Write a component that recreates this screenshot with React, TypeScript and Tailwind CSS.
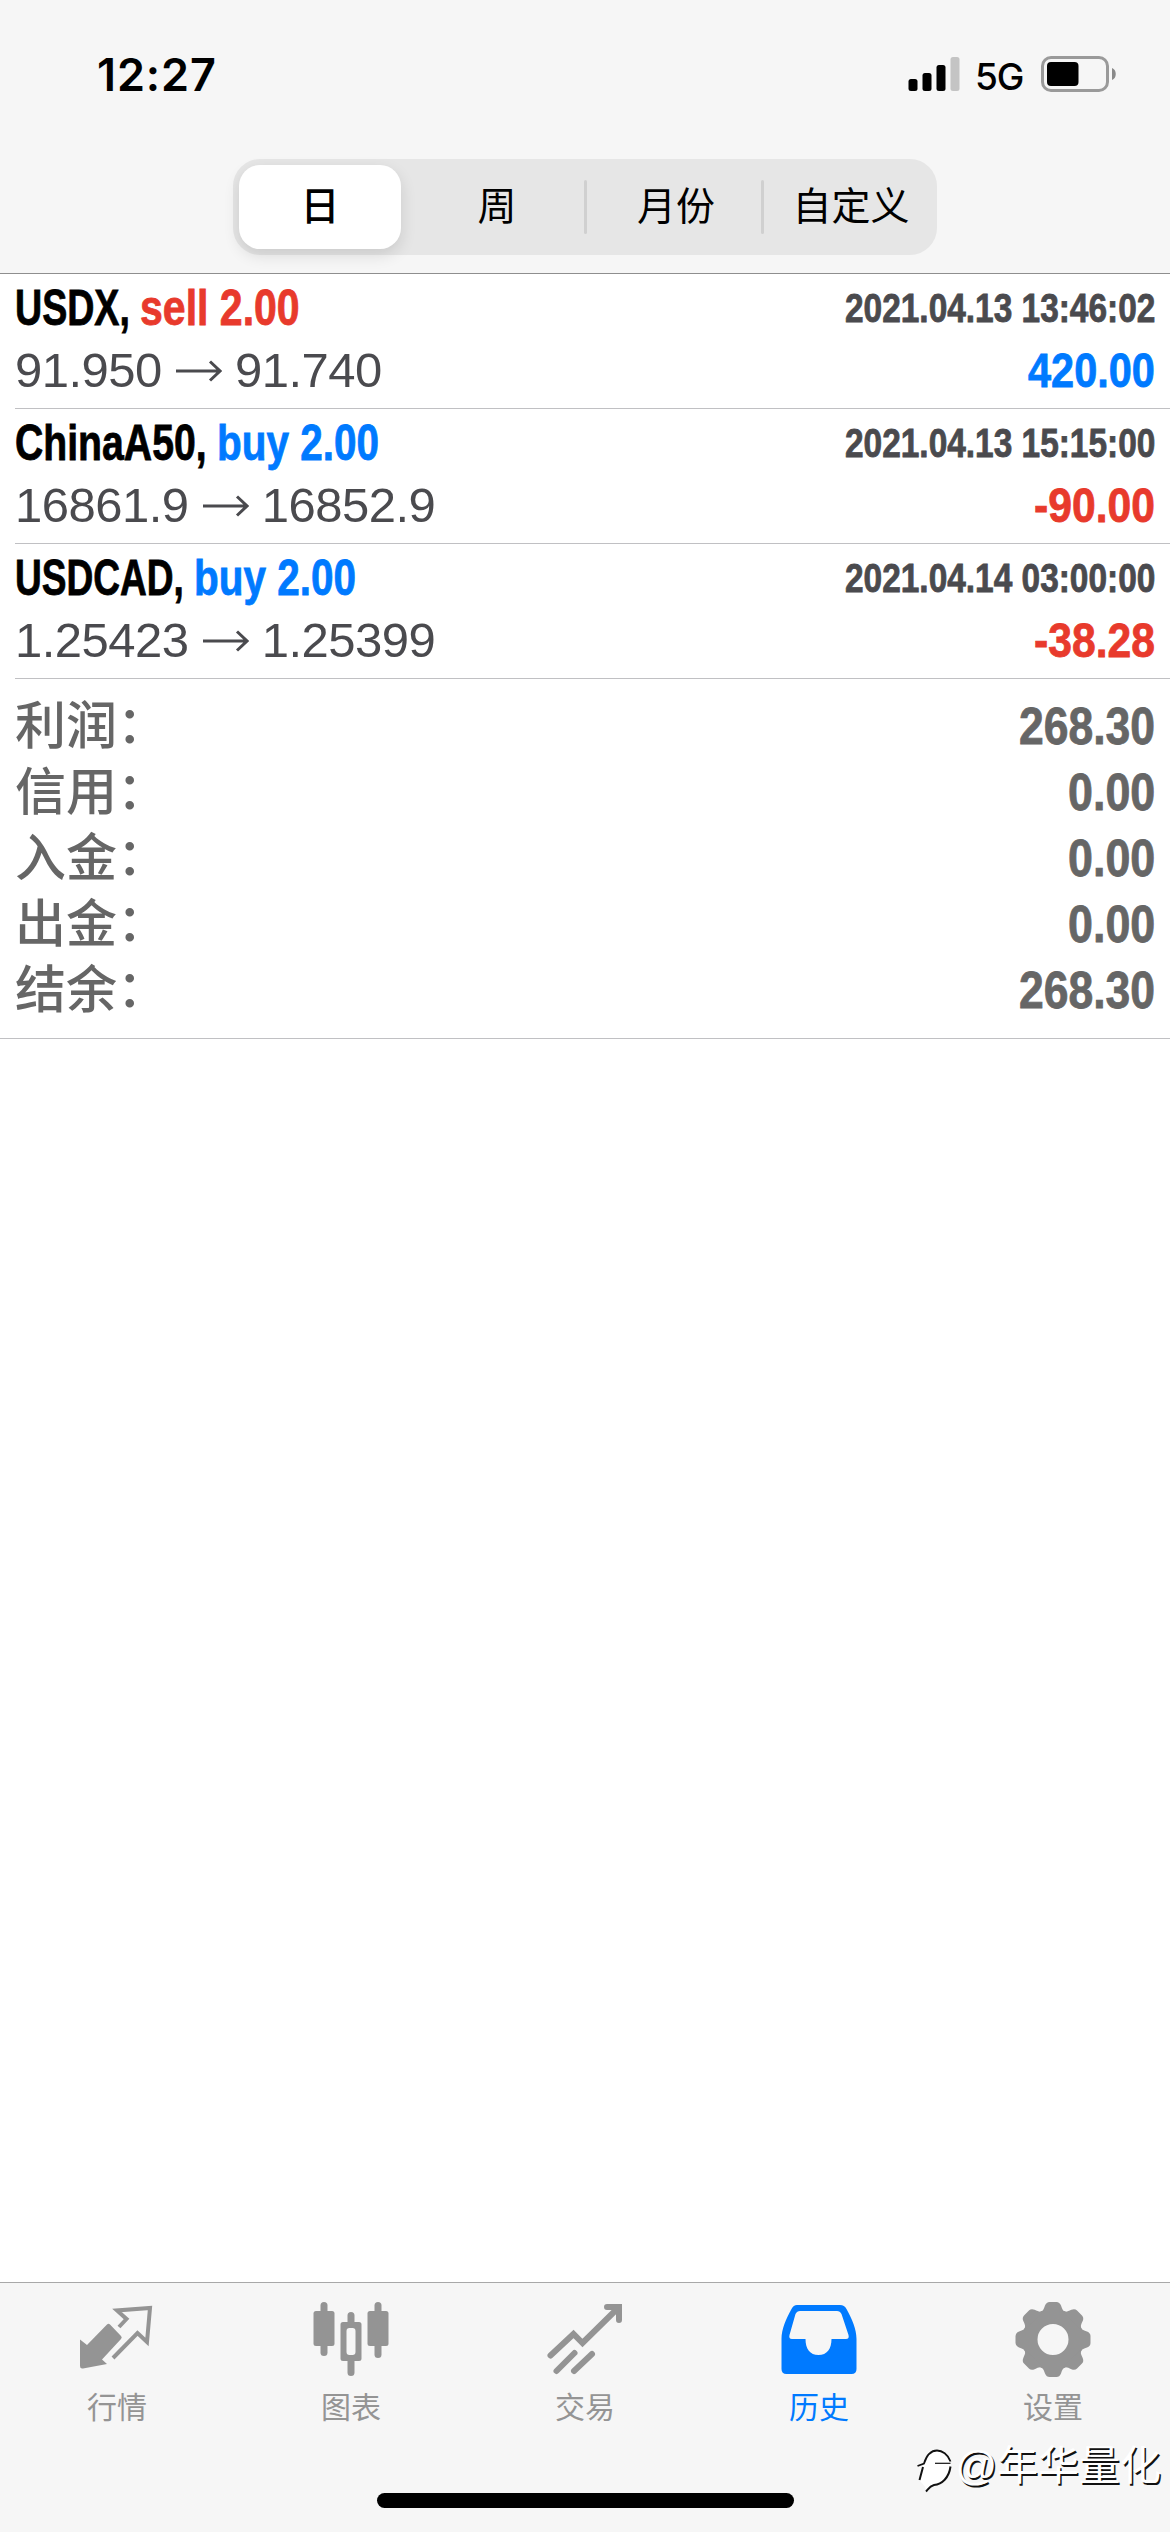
import { useLayoutEffect, useRef, useState } from 'react'
import type { ReactNode } from 'react'

type Side = 'buy' | 'sell'

interface Deal {
  symbol: string
  symbolWidth: number
  side: Side
  volume: string
  sideWidth: number
  open: string
  close: string
  time: string
  profit: string
  profitWidth: number
}

const DEALS: Deal[] = [
  { symbol: 'USDX,', symbolWidth: 115, side: 'sell', volume: '2.00', sideWidth: 160, open: '91.950', close: '91.740', time: '2021.04.13 13:46:02', profit: '420.00', profitWidth: 127 },
  { symbol: 'ChinaA50,', symbolWidth: 192, side: 'buy', volume: '2.00', sideWidth: 162, open: '16861.9', close: '16852.9', time: '2021.04.13 15:15:00', profit: '-90.00', profitWidth: 121 },
  { symbol: 'USDCAD,', symbolWidth: 169, side: 'buy', volume: '2.00', sideWidth: 162, open: '1.25423', close: '1.25399', time: '2021.04.14 03:00:00', profit: '-38.28', profitWidth: 121 },
]

const SUMMARY = [
  { label: '利润', value: '268.30', width: 136 },
  { label: '信用', value: '0.00', width: 87 },
  { label: '入金', value: '0.00', width: 87 },
  { label: '出金', value: '0.00', width: 87 },
  { label: '结余', value: '268.30', width: 136 },
]

// Condenses its text horizontally until it takes up exactly `width`
function Condensed({ width, className = '', children }: { width: number; className?: string; children: ReactNode }) {
  const ref = useRef<HTMLSpanElement>(null)
  const [scale, setScale] = useState(0.8)

  useLayoutEffect(() => {
    if (ref.current) setScale(width / ref.current.offsetWidth)
  }, [width, children])

  return (
    <span className={`block shrink-0 ${className}`} style={{ width }}>
      <span
        ref={ref}
        className="inline-block origin-left font-bold whitespace-nowrap [-webkit-text-stroke:0.8px_currentColor]"
        style={{ transform: `scaleX(${scale})` }}
      >
        {children}
      </span>
    </span>
  )
}

// ── Status bar ────────────────────────────────────────────────────────────
function StatusBar() {
  return (
    <div className="flex h-[159px] items-start justify-between pt-[56px] pr-[53px] pl-[97px]">
      <span className="font-['Inter'] text-[45px] leading-[37px] font-semibold tracking-[0.9px]">12:27</span>
      <div className="flex items-start">
        <svg width="52" height="36" viewBox="0 0 52 36" aria-hidden="true">
          <rect x="0.5" y="23" width="9" height="12" rx="2.5" />
          <rect x="14.5" y="17" width="9" height="18" rx="2.5" />
          <rect x="28.5" y="9" width="9" height="26" rx="2.5" />
          <rect x="42.5" y="1" width="9" height="34" rx="2.5" fill="#c4c4c4" />
        </svg>
        <span className="ml-[15px] w-[66px] font-['Inter'] text-[37px] leading-[41px] font-medium tracking-[-1.2px]">5G</span>
        <svg width="76" height="37" viewBox="0 0 76 37" aria-hidden="true">
          <rect x="1.5" y="1.5" width="65" height="33" rx="8.5" fill="none" stroke="#9a9a9a" strokeWidth="3" />
          <rect x="6" y="6" width="31.5" height="24" rx="4" />
          <path d="M71 12c5 1.500 5 10.500 0 12z" fill="#8a8a8a" />
        </svg>
      </div>
    </div>
  )
}

function PeriodTabs() {
  return (
    <div className="mx-auto flex h-24 w-[704px] items-stretch rounded-[27px] bg-[#e6e6e6] text-[39px] leading-none">
      <div className="my-1.5 mr-[9px] ml-[6px] flex w-[162px] items-center justify-center rounded-[21px] bg-white pb-px font-medium shadow-[0_6px_16px_rgba(0,0,0,0.12)]">
        日
      </div>
      <div className="flex w-[174px] items-center justify-center pb-px">周</div>
      <div className="my-[21px] w-[3px] rounded-full bg-[#d0d0d0]" />
      <div className="flex w-[174px] items-center justify-center pb-px pl-1">月份</div>
      <div className="my-[21px] w-[3px] rounded-full bg-[#d0d0d0]" />
      <div className="flex flex-1 items-center justify-center pb-px pl-px">自定义</div>
    </div>
  )
}

// ── History list ──────────────────────────────────────────────────────────
function Arrow() {
  return (
    <svg className="mr-[13px] ml-[14px]" width="46" height="24" viewBox="0 0 46 24" fill="none" stroke="currentColor" strokeWidth="3" aria-hidden="true">
      <path d="M0 12h44M34 2.500 44 12l-10 9.500" />
    </svg>
  )
}

function DealRow({ deal }: { deal: Deal }) {
  return (
    <div className="ml-[15px] h-[135px] border-b border-[#c0c0c3] pr-[15px]">
      <div className="flex h-[66px] items-center justify-between pt-0.5">
        <div className="flex text-[50px] leading-none">
          <Condensed width={deal.symbolWidth}>{deal.symbol}</Condensed>
          <Condensed
            width={deal.sideWidth}
            className={deal.side === 'buy' ? 'ml-[10px] text-[#007aff]' : 'ml-[10px] text-[#e83a2c]'}
          >
            {`${deal.side} ${deal.volume}`}
          </Condensed>
        </div>
        <Condensed width={310} className="pb-px text-[40px] leading-none text-[#4a4a4e]">{deal.time}</Condensed>
      </div>
      <div className="flex h-[61px] items-center justify-between text-[49px] leading-none">
        <div className="flex items-center tracking-[-0.5px] text-[#4a4a4e]">
          <span>{deal.open}</span>
          <Arrow />
          <span>{deal.close}</span>
        </div>
        <Condensed
          width={deal.profitWidth}
          className={deal.profit.startsWith('-') ? 'text-[#e83a2c]' : 'text-[#007aff]'}
        >
          {deal.profit}
        </Condensed>
      </div>
    </div>
  )
}

function Summary() {
  return (
    <div className="h-[360px] border-b border-[#c0c0c3] pt-[14px] pr-[15px] pl-[15px] text-[#666]">
      {SUMMARY.map((row) => (
        <div key={row.label} className="flex h-[66px] items-center justify-between text-[51px] leading-none">
          <span className="font-medium">
            {row.label}
            <span className="relative -top-px">：</span>
          </span>
          <Condensed width={row.width}>{row.value}</Condensed>
        </div>
      ))}
    </div>
  )
}

// ── Tab bar icons ─────────────────────────────────────────────────────────
function QuotesIcon() {
  return (
    <svg width="76" height="80" viewBox="0 0 76 80" fill="none" aria-hidden="true">
      <path d="M1 36.500 8 42 28 21.500q1.500-1.500 3 0L42 33q1.500 1.500 0 3L23 56.500 28 61 4 65.500q-3 .5-3-2.500Z" fill="currentColor" />
      <path d="M40 24 47.500 16 38 7.500 71 5 68 39 58.500 30 34 55" stroke="currentColor" strokeWidth="4" />
    </svg>
  )
}

function ChartsIcon() {
  return (
    <svg className="overflow-visible" width="76" height="80" viewBox="0 0 76 80" fill="currentColor" aria-hidden="true">
      <rect x="7.500" y="-1" width="7" height="54" rx="3.500" />
      <rect x="0.500" y="8" width="21" height="35" rx="2.500" />
      <rect x="61.500" y="-1" width="7" height="56" rx="3.500" />
      <rect x="54.500" y="8" width="21" height="35" rx="2.500" />
      <path d="M34.500 19v-6.500a3.500 3.500 0 0 1 7 0V19H46q2.500 0 2.500 2.500v34q0 2.500-2.500 2.500h-4.500v11.500a3.500 3.500 0 0 1-7 0V58H30q-2.500 0-2.500-2.500v-34q0-2.500 2.500-2.500Zm-1 9v21q0 3 3 3h3q3 0 3-3V28q0-3-3-3h-3q-3 0-3 3Z" fillRule="evenodd" />
    </svg>
  )
}

function TradeIcon() {
  return (
    <svg width="76" height="80" viewBox="0 0 76 80" fill="none" stroke="currentColor" strokeWidth="6" strokeLinecap="round" aria-hidden="true">
      <path d="M3.500 52.500 26.500 31 35.500 40 70 6" />
      <path d="M60 4h12v13" />
      <path d="m9.500 68 18-18M27 68l18-17" />
    </svg>
  )
}

function HistoryIcon() {
  return (
    <svg width="76" height="80" viewBox="0 0 76 80" fill="currentColor" fillRule="evenodd" aria-hidden="true">
      <path d="M16 2h43q4.500 0 6.500 4C71 16 75.500 26 75.500 36v30q0 5-5 5h-65q-5 0-5-5V36C.5 26 5 16 10.500 6q2-4 5.500-4Zm3 6q-3 0-4.500 3L8.500 32q-1 4 2.500 4h13.500c0 10 4.500 16 13 16s13-6 13-16H65q3.500 0 2.500-4L60.500 11Q59 8 56 8Z" />
    </svg>
  )
}

function SettingsIcon() {
  return (
    <svg className="overflow-visible" width="76" height="80" viewBox="0 0 76 80" fill="currentColor" aria-hidden="true">
      <circle cx="38" cy="36.500" r="23" fill="none" stroke="currentColor" strokeWidth="15" />
      {[0, 45, 90, 135, 180, 225, 270, 315].map((angle) => (
        <path
          key={angle}
          d="M24 9.500c4-1 4.500-3 6-7Q31.500-1 34.500-1h7q3 0 4.500 3.500c1.500 4 2 6 6 7z"
          transform={`rotate(${angle} 38 36.500)`}
        />
      ))}
    </svg>
  )
}

const TABS = [
  { label: '行情', icon: <QuotesIcon /> },
  { label: '图表', icon: <ChartsIcon /> },
  { label: '交易', icon: <TradeIcon /> },
  { label: '历史', icon: <HistoryIcon />, active: true },
  { label: '设置', icon: <SettingsIcon /> },
]

function Watermark() {
  return (
    <div className="absolute right-[9px] bottom-[42px] flex items-center text-[41px] leading-none text-white [text-shadow:1.5px_1.5px_0_#111]">
      <svg className="overflow-visible" width="38" height="48" viewBox="0 -7 38 48" fill="none" aria-hidden="true">
        <path d="M7 14C10 4 15 1 20 1c8 0 13 5 14 15-1 12-8 19-17 20-4 1-5 3-8 6 0-4-3-7-6-10Z" fill="#fff" />
        <g stroke="#111">
          <path d="M.5 17 7 14.500C10 5 15 1.500 20 1.500S31 5 33.500 12.500" strokeWidth="1.800" />
          <path d="M18 14.300h15.500" strokeWidth="1.200" />
          <path d="M6 18 2.500 31M33.500 17.500C32 29 25 35 17 36c-4 1-5 3-8 6.500" strokeWidth="2" />
        </g>
      </svg>
      <span>@年华量化</span>
    </div>
  )
}

function TabBar() {
  return (
    <div className="relative h-[250px] border-t border-[#a8a8a8] bg-[#f6f6f6]">
      <div className="grid grid-cols-5 pt-5">
        {TABS.map((tab) => (
          <div
            key={tab.label}
            className={tab.active ? 'flex flex-col items-center text-[#007aff]' : 'flex flex-col items-center text-[#949494]'}
          >
            {tab.icon}
            <span className="mt-[10px] text-[30px] leading-[30px]">{tab.label}</span>
          </div>
        ))}
      </div>
      <Watermark />
      <div className="absolute bottom-6 left-[377px] h-[15px] w-[417px] rounded-full bg-black" />
    </div>
  )
}

export default function App() {
  return (
    <div className="flex h-[2532px] w-[1170px] flex-col overflow-hidden bg-white font-['Liberation_Sans','Noto_Sans_CJK_SC',sans-serif] text-black">
      <header className="h-[274px] border-b border-[#8e8e8e] bg-[#f6f6f6]">
        <StatusBar />
        <PeriodTabs />
      </header>
      <main className="flex-1">
        {DEALS.map((deal) => (
          <DealRow key={deal.symbol} deal={deal} />
        ))}
        <Summary />
      </main>
      <TabBar />
    </div>
  )
}
